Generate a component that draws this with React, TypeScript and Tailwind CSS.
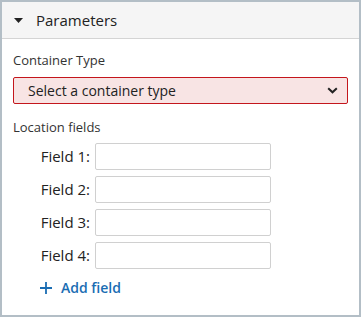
export default function App() {
  const fields = ["Field 1:", "Field 2:", "Field 3:", "Field 4:"];
  return (
    <div className="w-[361px] h-[317px] bg-white border-2 border-[#b3bec6] font-['Open_Sans',sans-serif] text-[#333]">
      <div className="h-[37px] bg-[#f5f5f5] border-b border-[#d4d4d4] flex items-center pl-[12px]">
        <svg width="9" height="5" viewBox="0 0 9 5" className="mr-[13px]">
          <path d="M0 0 L9 0 L4.5 5 Z" fill="#222" />
        </svg>
        <span className="text-[15px] text-[#222]">Parameters</span>
      </div>
      <div className="px-[11px] pt-[12px]">
        <div className="text-[13px] text-[#333] leading-[18px]">Container Type</div>
        <div className="mt-[8px] h-[27px] border border-[#c4161c] rounded-[2px] bg-[#f8e4e4] flex items-center justify-between pl-[14px] pr-[9px]">
          <span className="text-[14px] text-[#222]">Select a container type</span>
          <svg width="11" height="7" viewBox="0 0 11 7">
            <path d="M1.2 1.2 L5.5 5.3 L9.8 1.2" fill="none" stroke="#222" strokeWidth="2" />
          </svg>
        </div>
        <div className="mt-[14px] text-[13px] text-[#333] leading-[18px]">Location fields</div>
        <div className="mt-[7px] flex flex-col gap-[6px]">
          {fields.map((f) => (
            <div key={f} className="flex items-center">
              <span className="w-[80px] text-right text-[15px] text-[#222] pr-[3px]">{f}</span>
              <div className="ml-[2px] w-[176px] h-[27px] border border-[#d0d0d0] rounded-[2px] bg-white" />
            </div>
          ))}
        </div>
        <div className="mt-[8px] ml-[27px] flex items-center gap-[9px] text-[#1a6db3]">
          <svg width="12" height="12" viewBox="0 0 12 12">
            <path d="M6 0 V12 M0 6 H12" stroke="#1a6db3" strokeWidth="1.8" />
          </svg>
          <span className="text-[14px] font-semibold">Add field</span>
        </div>
      </div>
    </div>
  );
}
